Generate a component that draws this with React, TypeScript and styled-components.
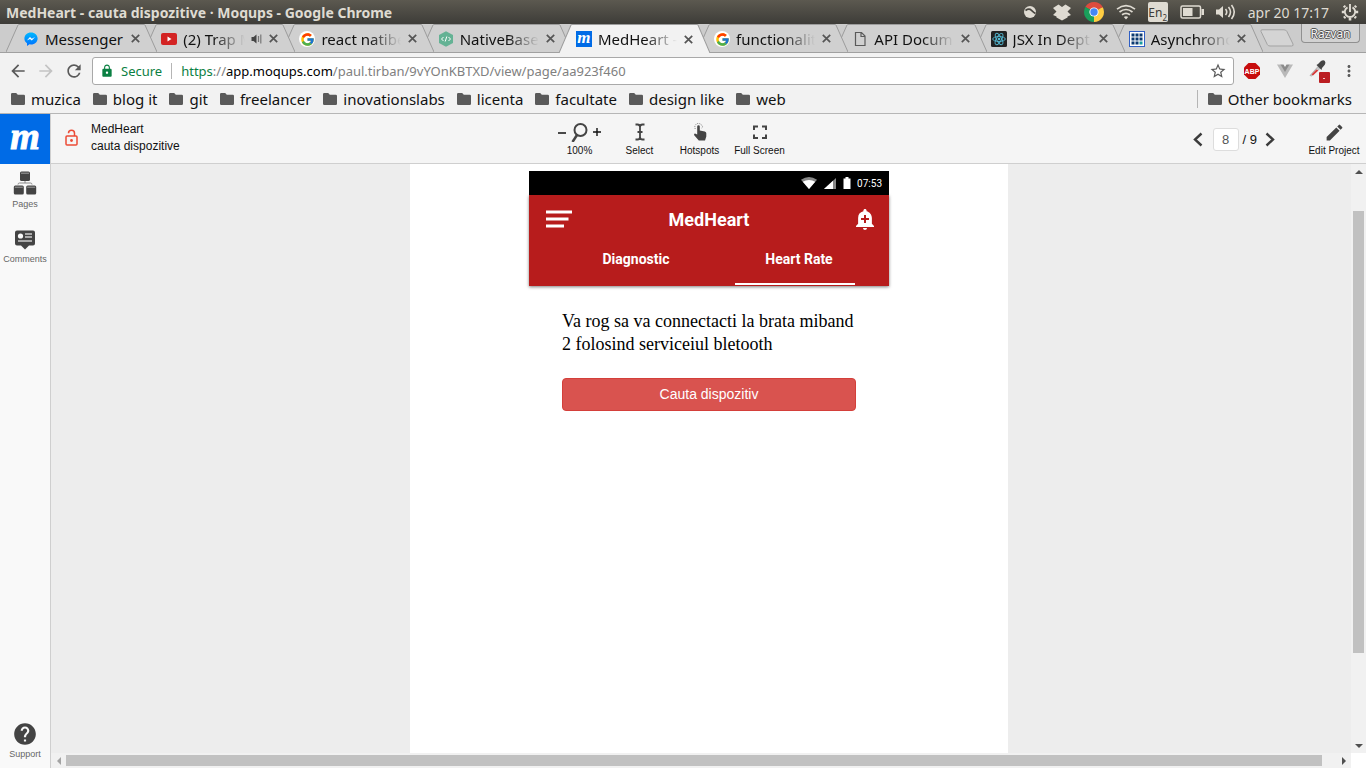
import React from "react";
import styled, { createGlobalStyle } from "styled-components";
import { FcGoogle } from "react-icons/fc";
import {
  MdAddAlert,
  MdArrowBack,
  MdArrowForward,
  MdEdit,
  MdHelp,
  MdLock,
  MdMoreVert,
  MdRefresh,
  MdStarBorder,
} from "react-icons/md";

const uiFont = `"Noto Sans", "Open Sans", sans-serif`;
const appFont = `"Liberation Sans", Arial, sans-serif`;

const GlobalStyle = createGlobalStyle`
  * { box-sizing: border-box; }
  body { margin: 0; font-family: ${appFont}; overflow: hidden; }
  button { border: 0; padding: 0; background: none; font: inherit; color: inherit; cursor: pointer; }
  a { color: inherit; text-decoration: none; }
  svg { display: block; flex: none; }
`;

/* ---------- desktop and browser frame ---------- */

const Screen = styled.div`
  display: flex;
  flex-direction: column;
  height: 100vh;
`;

const DesktopBar = styled.header`
  display: flex;
  align-items: center;
  justify-content: space-between;
  height: 24px;
  padding: 0 7px 0 6px;
  background: linear-gradient(#5c5950, #3d3c38);
  color: #dfdbd2;
  font-family: ${uiFont};
  font-size: 14px;
  white-space: nowrap;
`;

const WindowTitle = styled.h1`
  margin: 0;
  font-size: 14px;
  font-weight: 700;
`;

const Tray = styled.div`
  display: flex;
  align-items: center;
  gap: 12px;
`;

const Language = styled.span`
  display: flex;
  align-items: center;
  justify-content: center;
  width: 20px;
  height: 20px;
  border-radius: 2px;
  background: #dfdbd2;
  color: #3d3c38;
  font-size: 12px;

  sub {
    font-size: 8px;
    line-height: 8px;
    align-self: flex-end;
  }
`;

const TabStrip = styled.div`
  display: flex;
  height: 29px;
  padding: 0 6px;
  background: #cccccc;
  border-bottom: 1px solid #a0a0a0;
  font-family: ${uiFont};
`;

const TabList = styled.nav`
  display: flex;
  flex: 1;
  min-width: 0;
`;

const TabShape = styled.div<{ $active?: boolean; $order: number }>`
  position: relative;
  z-index: ${(p) => (p.$active ? 20 : p.$order)};
  display: flex;
  flex: 1 1 0;
  min-width: 0;
  height: ${(p) => (p.$active ? 29 : 28)}px;
  margin-right: -13px;
  color: ${(p) => (p.$active ? "#f2f2f2" : "#d0d0d0")};

  &:last-child {
    margin-right: 0;
  }
`;

const TabBody = styled.div`
  display: flex;
  align-items: center;
  flex: 1;
  min-width: 0;
  padding: 0 4px;
  border-top: 1px solid #9c9c9c;
  background: currentColor;
`;

const TabLink = styled.a`
  display: flex;
  align-items: center;
  flex: 1;
  gap: 6px;
  min-width: 0;
  color: #111;
  font-size: 15px;
  line-height: 20px;
`;

const TabText = styled.span<{ $fade: boolean }>`
  flex: 1;
  overflow: hidden;
  white-space: nowrap;
  mask-image: ${(p) => (p.$fade ? "linear-gradient(to left, transparent, #000 32px)" : "none")};
`;

const CloseButton = styled.button`
  display: flex;
  margin-left: 7px;
`;

const NewTab = styled.button`
  display: flex;
  align-items: center;
  margin: 0 6px 0 -4px;
`;

const ProfileButton = styled.button`
  align-self: flex-start;
  width: 59px;
  height: 19px;
  border: 1px solid #909090;
  border-top: 0;
  border-radius: 0 0 4px 4px;
  background: #d2d2d2;
  color: #f4f4f4;
  font-size: 12px;
  line-height: 20px;
  text-shadow: 1px 0 #555, -1px 0 #555, 0 1px #555, 0 -1px #555;
`;

const Toolbar = styled.div`
  display: flex;
  align-items: center;
  height: 36px;
  padding: 0 8px;
  background: #f2f2f2;
  color: #5a5a5a;
  font-family: ${uiFont};
`;

const NavButtons = styled.div`
  display: flex;
  gap: 8px;
  width: 84px;
`;

const NavButton = styled.button<{ $faded?: boolean }>`
  opacity: ${(p) => (p.$faded ? 0.3 : 1)};
`;

const AddressBar = styled.div`
  display: flex;
  align-items: center;
  flex: 1;
  height: 28px;
  padding: 0 6px 0 7px;
  border: 1px solid #a9a9a9;
  border-radius: 3px;
  background: #fff;
  font-size: 13px;
`;

const Secure = styled.span`
  display: flex;
  align-items: center;
  gap: 7px;
  margin-right: 9px;
  padding-right: 9px;
  border-right: 1px solid #b5b5b5;
  color: #0b8043;
  line-height: 16px;
`;

const Url = styled.span`
  flex: 1;
  color: #808080;

  em { font-style: normal; color: #0b8043; }
  b { font-weight: 400; color: #000; }
`;

const Extensions = styled.div`
  display: flex;
  align-items: center;
  gap: 15px;
  padding: 0 10px 0 9px;
`;

const BookmarkBar = styled.nav`
  display: flex;
  align-items: center;
  height: 25px;
  padding: 0 14px 5px 11px;
  border-bottom: 1px solid #b6b6b6;
  background: #f2f2f2;
  color: #111;
  font-family: ${uiFont};
  font-size: 15px;
`;

const Bookmark = styled.a`
  display: flex;
  align-items: center;
  gap: 6px;
  margin-right: 12px;
  white-space: nowrap;
  line-height: 18px;
`;

const OtherBookmarks = styled(Bookmark)`
  margin: 0 0 0 auto;
  padding-left: 10px;
  border-left: 1px solid #b5b5b5;
`;

/* ---------- mockup viewer ---------- */

const Viewer = styled.div`
  display: flex;
  flex: 1;
  min-height: 0;
`;

const Sidebar = styled.aside`
  display: flex;
  flex-direction: column;
  align-items: stretch;
  width: 51px;
  border-right: 1px solid #cfcfcf;
  background: #f9f9f9;
`;

const Logo = styled.a`
  display: flex;
  justify-content: center;
  width: 50px;
  height: 50px;
  background: #006be6;
  color: #fff;
  font: italic 700 38px/44px "Liberation Serif", serif;
  -webkit-text-stroke: 1px #fff;
`;

const SideButton = styled.button`
  display: flex;
  flex-direction: column;
  align-items: center;
  justify-content: flex-end;
  gap: 3px;
  height: 55px;
  padding-bottom: 9px;
  color: #444;
  font-size: 9px;
  line-height: 12px;
`;

const SupportButton = styled(SideButton)`
  gap: 1px;
  margin-top: auto;
  padding-bottom: 8px;
`;

const SideLabel = styled.span`
  color: #666;
`;

const Main = styled.main`
  display: flex;
  flex-direction: column;
  flex: 1;
  min-width: 0;
`;

const ViewerBar = styled.div`
  display: grid;
  grid-template-columns: 1fr auto 1fr;
  align-items: center;
  height: 50px;
  padding: 0 5px 0 13px;
  border-bottom: 1px solid #cfcfcf;
  background: #f5f5f5;
  color: #111;
`;

const Project = styled.div`
  display: flex;
  align-items: center;
  gap: 11px;
  padding-bottom: 2px;
  font-size: 12px;
  line-height: 17px;
`;

const Tools = styled.div`
  display: flex;
  margin-right: 86px;
  padding-top: 2px;
`;

const Tool = styled.button<{ $width: number }>`
  display: flex;
  flex-direction: column;
  align-items: center;
  gap: 3px;
  width: ${(p) => p.$width}px;
  font-size: 10px;
  line-height: 12px;
  color: #111;
`;

const ToolGlyph = styled.span`
  display: flex;
  align-items: center;
  justify-content: center;
  height: 20px;
  color: #444;
`;

const Paging = styled.div`
  display: flex;
  align-items: center;
  justify-content: flex-end;
  padding-top: 2px;
  font-size: 13px;
  gap: 4px;
`;

const PageInput = styled.input`
  width: 26px;
  height: 23px;
  margin-left: 2px;
  padding: 0;
  border: 1px solid #ddd;
  border-radius: 3px;
  background: #fff;
  color: #555;
  font: 13px ${appFont};
  text-align: center;
`;

const PageArrow = styled.button`
  display: flex;
  margin: 0 4px;
`;

const EditTool = styled(Tool)`
  margin-left: 24px;
`;

const ScrollGrid = styled.div`
  display: grid;
  grid-template: minmax(0, 1fr) 15px / minmax(0, 1fr) 15px;
  flex: 1;
  min-height: 0;
  background: #fff;
`;

const Canvas = styled.div`
  display: flex;
  justify-content: center;
  padding-left: 16px;
  overflow: hidden;
  background: #ededed;
`;

const Page = styled.section`
  display: flex;
  justify-content: center;
  flex: 0 1 598px;
  padding-top: 7px;
  background: #fff;
`;

const Rail = styled.div<{ $vertical?: boolean }>`
  display: flex;
  flex-direction: ${(p) => (p.$vertical ? "column" : "row")};
  background: #f1f1f1;
`;

const RailArrow = styled.button`
  display: flex;
  align-items: center;
  justify-content: center;
  width: 15px;
  height: 15px;
`;

const RailSpace = styled.div<{ $share: number }>`
  flex: ${(p) => p.$share} 1 0;
`;

const Thumb = styled(RailSpace)<{ $vertical?: boolean }>`
  margin: ${(p) => (p.$vertical ? "0 2px" : "2px 0")};
  background: #c1c1c1;
`;

/* ---------- phone mockup ---------- */

const Phone = styled.article`
  flex: 0 1 360px;
`;

const StatusBar = styled.div`
  display: flex;
  align-items: center;
  justify-content: flex-end;
  height: 24px;
  padding-right: 7px;
  background: #000;
  color: #fff;
  font: 10px Roboto, sans-serif;
`;

const StatusIcons = styled.div`
  display: flex;
  align-items: center;
  gap: 7px;
  margin-right: 6px;
`;

const AppHeader = styled.header`
  height: 91px;
  background: #b71c1c;
  box-shadow: 0 1px 3px rgba(0, 0, 0, 0.5);
  color: #fff;
  font-family: Roboto, sans-serif;
`;

const AppBar = styled.div`
  display: grid;
  grid-template-columns: 1fr auto 1fr;
  align-items: center;
  height: 48px;
  padding: 0 12px;

  button:last-child { justify-self: end; }
`;

const AppTitle = styled.h2`
  margin: 0;
  padding-top: 2px;
  font-size: 18px;
  font-weight: 700;
  line-height: 24px;
`;

const AppTabs = styled.div`
  display: flex;
  justify-content: flex-end;
  gap: 43px;
  padding-right: 34px;
`;

const AppTab = styled.button<{ $current?: boolean }>`
  width: 120px;
  height: 42px;
  padding: 0 0 9px 8px;
  border-bottom: 2px solid ${(p) => (p.$current ? "#fff" : "transparent")};
  font-size: 14px;
  font-weight: 700;
  line-height: 20px;
`;

const AppContent = styled.div`
  padding: 24px 33px;
`;

const Message = styled.p`
  margin: 0 0 22px;
  color: #000;
  font: 18px/23px "Liberation Serif", "Times New Roman", serif;
`;

const SearchButton = styled.button`
  width: 100%;
  height: 33px;
  padding-bottom: 2px;
  border: 1px solid #d43f3a;
  border-radius: 4px;
  background: #d9534f;
  color: #fff;
  font-size: 14px;
`;

/* ---------- drawings ---------- */

const FolderIcon = () => (
  <svg width="14" height="12" viewBox="0 0 14 12">
    <path d="M1.200 0H5.200L6.800 1.700H12.800Q14 1.700 14 2.900V10.800Q14 12 12.800 12H1.200Q0 12 0 10.800V1.200Q0 0 1.200 0z" fill="#5a5a5a" />
  </svg>
);

const MessengerIcon = () => (
  <svg width="16" height="16" viewBox="0 0 16 16">
    <defs>
      <linearGradient id="msg" x1="0" y1="0" x2="0" y2="1">
        <stop offset="0" stopColor="#00b8ff" />
        <stop offset="1" stopColor="#006fff" />
      </linearGradient>
    </defs>
    <path fill="url(#msg)" d="M8 1.500c3.800 0 6.600 2.600 6.600 6s-2.800 6-6.600 6l-1.500-.2L4 15v-2.700C2.300 11.200 1.400 9.500 1.400 7.500c0-3.400 2.800-6 6.600-6z" />
    <path fill="#fff" d="M3.800 9.600 7 6.100l1.800 1.600 3.200-1.600-3.200 3.400L7 7.900z" />
  </svg>
);

const YoutubeIcon = () => (
  <svg width="16" height="16" viewBox="0 0 16 16">
    <rect y="2" width="16" height="12" rx="2" fill="#d32323" />
    <path d="M6.500 5.500v5L10.500 8z" fill="#fff" />
  </svg>
);

const GoogleIcon = () => (
  <svg width="16" height="16" viewBox="0 0 16 16">
    <circle cx="8" cy="8" r="8" fill="#fff" />
    <FcGoogle x="1" y="1" width="14" height="14" />
  </svg>
);

const NativeBaseIcon = () => (
  <svg width="16" height="16" viewBox="0 0 16 16">
    <path d="M8 .3 15 4v8l-7 3.700L1 12V4z" fill="#64b294" />
    <path d="M5.500 6 3.500 8l2 2M10.500 6l2 2-2 2M8.800 5.500l-1.600 5" stroke="#fff" fill="none" />
  </svg>
);

const MFavicon = styled.span`
  width: 16px;
  height: 16px;
  flex: none;
  background: #006be6;
  color: #fff;
  font: italic 700 17px/13px "Liberation Serif", serif;
  text-align: center;
`;

const DocIcon = () => (
  <svg width="16" height="16" viewBox="0 0 16 16" fill="none" stroke="#5a5a5a" strokeWidth="1.200">
    <path d="M3.500 1.500h6l3.500 3.500v9.500h-9.500zM9 1.500V5.500h4" />
  </svg>
);

const ReactIcon = () => (
  <svg width="16" height="16" viewBox="0 0 16 16">
    <rect width="16" height="16" rx="1.500" fill="#222" />
    <g fill="none" stroke="#53b7d1" strokeWidth=".9">
      <ellipse cx="8" cy="8" rx="6.300" ry="2.500" />
      <ellipse cx="8" cy="8" rx="6.300" ry="2.500" transform="rotate(60 8 8)" />
      <ellipse cx="8" cy="8" rx="6.300" ry="2.500" transform="rotate(120 8 8)" />
    </g>
    <circle cx="8" cy="8" r="1.300" fill="#53b7d1" />
  </svg>
);

const GridIcon = () => (
  <svg width="16" height="16" viewBox="0 0 16 16">
    <rect x=".5" y=".5" width="15" height="15" fill="#fff" stroke="#2f5fc4" />
    {[2, 6, 10].map((y) =>
      [2, 6, 10].map((x) => (
        <rect key={`${x}-${y}`} x={x + 0.5} y={y + 0.5} width="3" height="3" fill={x + y === 20 ? "#1a9ba0" : "#0c3a70"} />
      ))
    )}
  </svg>
);

const SlantLeft = ({ active }: { active?: boolean }) => (
  <svg width="13" height={active ? 29 : 28} viewBox="0 0 13 28" preserveAspectRatio="none">
    <path d="M0 28 12 1Q12.300.5 13 .5V28z" fill="currentColor" />
    <path d="M0 28 12 1Q12.300.5 13 .5" fill="none" stroke="#9c9c9c" />
  </svg>
);

const SlantRight = ({ active }: { active?: boolean }) => (
  <svg width="13" height={active ? 29 : 28} viewBox="0 0 13 28" preserveAspectRatio="none">
    <path d="M13 28 1 1Q.7.5 0 .5V28z" fill="currentColor" />
    <path d="M13 28 1 1Q.7.5 0 .5" fill="none" stroke="#9c9c9c" />
  </svg>
);

const CloseIcon = () => (
  <svg width="9" height="9" viewBox="0 0 9 9" stroke="#555" strokeWidth="1.700">
    <path d="M.8.8l7.400 7.400M8.200.8.8 8.200" />
  </svg>
);

const SpeakerIcon = () => (
  <svg width="11" height="12" viewBox="0 0 11 12">
    <path d="M.5 4h2L5.500 1.500v9L2.500 8h-2z" fill="#444" />
    <path d="M7.500 3v6M9.800 1.500v9" stroke="#777" strokeWidth="1.200" />
  </svg>
);

const SphereIcon = () => (
  <svg width="20" height="20" viewBox="0 0 20 20">
    <circle cx="10" cy="10" r="6" fill="#dfdbd2" />
    <path d="M5.500 8.500Q9 6 11.500 8.300T15.500 11.500" fill="none" stroke="#47453f" strokeWidth="1.700" />
  </svg>
);

const DropboxIcon = () => (
  <svg width="20" height="20" viewBox="0 0 20 20" fill="#dfdbd2">
    <path d="M6.500 2.500 10 5l3.500-2.500L19 6l-3.500 3.500L19 13l-3.500 1.500v1L10 18.500l-5.500-3v-1L1 13l3.500-3.500L1 6z" />
  </svg>
);

const ChromeIcon = () => (
  <svg width="20" height="20" viewBox="0 0 20 20">
    <path d="M10 10 1.340 5A10 10 0 0 1 18.660 5z" fill="#dd4b3e" />
    <path d="M10 10 18.660 5A10 10 0 0 1 10 20z" fill="#ffcd42" />
    <path d="M10 10V20A10 10 0 0 1 1.340 5z" fill="#1a9f5b" />
    <path d="M10 5.400h8.900L18.660 5 10 4z" fill="#dd4b3e" />
    <path d="M6 12.300 1.340 5 10 10z" fill="#1a9f5b" />
    <path d="M14 12.300 10 20V13z" fill="#ffcd42" />
    <circle cx="10" cy="10" r="4.600" fill="#fff" />
    <circle cx="10" cy="10" r="3.700" fill="#4687f4" />
  </svg>
);

const WifiIcon = () => (
  <svg width="20" height="16" viewBox="0 0 20 16" fill="none" stroke="#dfdbd2" strokeWidth="1.700">
    <path d="M1 5.200q9-7 18 0M3.500 8q6.500-5 13 0M6 10.800q4-3 8 0" />
    <path d="M7.800 13q2.200-1.500 4.400 0L10 15.400z" fill="#dfdbd2" stroke="none" />
  </svg>
);

const BatteryIcon = () => (
  <svg width="24" height="14" viewBox="0 0 24 14">
    <rect x="1" y="1" width="19.500" height="12" rx="1.500" fill="none" stroke="#dfdbd2" strokeWidth="1.500" />
    <rect x="3" y="3" width="9.500" height="8" fill="#dfdbd2" />
    <path d="M21.500 4H24v6h-2.500z" fill="#dfdbd2" />
  </svg>
);

const VolumeIcon = () => (
  <svg width="20" height="16" viewBox="0 0 20 16">
    <path d="M0 5.500h3L7 2v12L3 10.500H0z" fill="#dfdbd2" />
    <path d="M9.500 5q2.500 3 0 6M12.500 3q4 5 0 10M15.500 1q5.500 7 0 14" fill="none" stroke="#dfdbd2" strokeWidth="1.600" />
  </svg>
);

const PowerIcon = () => (
  <svg width="18" height="18" viewBox="0 0 18 18" fill="none" stroke="#dfdbd2">
    <path d="M6.500 4.300a5.200 5.200 0 1 0 5 0M9 1V9" strokeWidth="1.900" />
    <path d="M4.200 4.200 2.800 2.800M13.800 4.200l1.400-1.400M3 9H.8M15 9h2.200M4.300 13.700 3 15M13.700 13.700l1.300 1.300M9 15v2.400" strokeWidth="2.600" />
  </svg>
);

const AbpIcon = () => (
  <svg width="18" height="18" viewBox="0 0 18 18">
    <path d="M5.500 1h7L17 5.500v7L12.500 17h-7L1 12.500v-7z" fill="#c70d0d" />
    <text x="9" y="11.500" fill="#fff" fontFamily="Liberation Sans" fontWeight="700" fontSize="7" textAnchor="middle">ABP</text>
  </svg>
);

const VueIcon = () => (
  <svg width="18" height="18" viewBox="0 0 18 18">
    <path d="M1 2.500h4L9 9l4-6.500h4L9 16z" fill="#b9b9b9" />
    <path d="M4.500 2.500H7.500L9 5l1.500-2.500h3L9 10z" fill="#8b8b8b" />
  </svg>
);

const PickerIcon = () => (
  <svg width="21" height="24" viewBox="0 0 21 24">
    <path d="M1 16.500 9 7.500l2 2-8.500 7.500z" fill="#c9c9c9" stroke="#999" strokeWidth=".6" />
    <path d="m2.500 15.500 5-5 1.800 1-5.300 5z" fill="#d93a3a" />
    <path d="M7.500 6 9 5 12 2q2.500-1.500 3.800 0t0 3.800L13 9l-.5 2z" fill="#454545" />
    <rect x="10" y="13" width="11" height="11" rx="1" fill="#bb1e22" />
    <rect x="14" y="19" width="2" height="1" fill="#f3c6c6" />
  </svg>
);

const PadlockOpen = () => (
  <svg width="16" height="18" viewBox="0 0 16 18" fill="none" stroke="#ec4b36" strokeWidth="1.500">
    <rect x="2" y="7" width="11" height="9" rx="1" />
    <path d="M4.500 4.200C4.500 2.400 5.800 1.200 7.500 1.200s3 1.200 3 3V7" />
    <circle cx="7.500" cy="11.500" r="1.400" fill="#ec4b36" stroke="none" />
  </svg>
);

const PagesIcon = () => (
  <svg width="24" height="24" viewBox="0 0 24 24">
    <g fill="#444">
      <rect x="7" y=".5" width="10" height="9.500" rx="1.500" />
      <rect x=".8" y="14.500" width="10" height="9" rx="1.500" />
      <rect x="13.200" y="14.500" width="10" height="9" rx="1.500" />
    </g>
    <path d="M8 2.200h8M1.800 16.200h8M14.200 16.200h8" stroke="#aaa" strokeWidth=".9" />
    <path d="M5 13.500Q5 12 6.500 12h11q1.500 0 1.500 1.500M12 10v2" fill="none" stroke="#888" />
  </svg>
);

const CommentsIcon = () => (
  <svg width="22" height="20" viewBox="0 0 22 20">
    <path d="M3 .5h16q2 0 2 2v11q0 2-2 2h-4L11 19.500 7 15.500H3q-2 0-2-2v-11q0-2 2-2z" fill="#444" />
    <circle cx="6.500" cy="6" r="2.600" fill="#f9f9f9" />
    <path d="M11 4h7M11 7h7M4 11h14" stroke="#ccc" strokeWidth="1.300" />
  </svg>
);

const ZoomIcon = () => (
  <svg width="44" height="20" viewBox="0 0 44 20" fill="none" stroke="#444">
    <path d="M0 11h8M35 10h8M39 6v8" stroke="#111" strokeWidth="1.400" />
    <circle cx="22.500" cy="8" r="6" strokeWidth="2" />
    <path d="M19 13 14.500 20" strokeWidth="2.500" />
  </svg>
);

const TextCursorIcon = () => (
  <svg width="10" height="18" viewBox="0 0 10 18" fill="none" stroke="#444" strokeWidth="1.800">
    <path d="M.5 1.500h2Q5 1.500 5 4v10q0 2.500-2.500 2.500h-2M9.500 1.500h-2Q5 1.500 5 4v10q0 2.500 2.500 2.500h2M2.500 9h5" />
  </svg>
);

const HotspotIcon = () => (
  <svg width="14" height="18" viewBox="0 0 14 18" fill="none">
    <path d="M4.200 3.600Q4.200 2.200 5.500 2.200T6.800 3.600V7.500L11.800 8.400Q13.300 8.700 13.300 10.300V13.500L12 17.500H5.800L1.200 12.200Q.6 11 2 10.600L4.200 11.500z" fill="#444" />
    <path d="M2.300 6Q1 3 3.200 1.200T8 1.500 8.800 5" stroke="#777" strokeDasharray="1 1" />
  </svg>
);

const FullScreenIcon = () => (
  <svg width="14" height="14" viewBox="0 0 14 14" fill="none" stroke="#444" strokeWidth="2">
    <path d="M1 5V1.500h4M9 1.500h4V5M13 9.500V13H9M5 13H1V9.500" />
  </svg>
);

const Chevron = ({ flip }: { flip?: boolean }) => (
  <svg width="10" height="15" viewBox="0 0 10 15" fill="none" stroke="#3c3c3c" strokeWidth="2.400">
    <path d={flip ? "M1.500 1.500 8 7.500l-6.500 6" : "M8.500 1.500 2 7.500l6.500 6"} />
  </svg>
);

const arrowPaths = {
  up: "M0 6 4 2l4 4z",
  down: "M0 2h8L4 6z",
  left: "M6 0v8L2 4z",
  right: "M2 0v8l4-4z",
};

const Triangle = ({ dir, color = "#505050" }: { dir: keyof typeof arrowPaths; color?: string }) => (
  <svg width="8" height="8" viewBox="0 0 8 8">
    <path d={arrowPaths[dir]} fill={color} />
  </svg>
);

const PhoneWifi = () => (
  <svg width="16" height="12" viewBox="0 0 16 12">
    <path d="M0 2.800q8-5.600 16 0L8 12z" fill="#888" />
    <path d="M1.800 4.800q6.200-3.600 12.400 0L8 12z" fill="#fff" />
  </svg>
);

const PhoneSignal = () => (
  <svg width="12" height="12" viewBox="0 0 12 12">
    <path d="M0 12 12 1v11z" fill="#888" />
    <path d="M0 12 9 3.700V12z" fill="#fff" />
  </svg>
);

const PhoneBattery = () => (
  <svg width="8" height="12" viewBox="0 0 8 12">
    <path d="M.5 1.500H2.500V0h3v1.500h2V12h-7z" fill="#fff" />
  </svg>
);

const MenuIcon = () => (
  <svg width="31" height="18" viewBox="-5 0 31 18" stroke="#fff" strokeWidth="3">
    <path d="M0 2h26M0 9h22.500M0 16h18" />
  </svg>
);

/* ---------- data ---------- */

type BrowserTab = { title: string; icon: React.ReactNode; active?: boolean; audio?: boolean };

const tabs: BrowserTab[] = [
  { title: "Messenger", icon: <MessengerIcon /> },
  { title: "(2) Trap M", icon: <YoutubeIcon />, audio: true },
  { title: "react natibe", icon: <GoogleIcon /> },
  { title: "NativeBase", icon: <NativeBaseIcon /> },
  { title: "MedHeart -", icon: <MFavicon>m</MFavicon>, active: true },
  { title: "functionalit", icon: <GoogleIcon /> },
  { title: "API Docum", icon: <DocIcon /> },
  { title: "JSX In Dept", icon: <ReactIcon /> },
  { title: "Asynchrono", icon: <GridIcon /> },
];

const bookmarks = ["muzica", "blog it", "git", "freelancer", "inovationslabs", "licenta", "facultate", "design like", "web"];

export default function App() {
  return (
    <Screen>
      <GlobalStyle />
      <DesktopBar>
        <WindowTitle>MedHeart - cauta dispozitive · Moqups - Google Chrome</WindowTitle>
        <Tray>
          <SphereIcon />
          <DropboxIcon />
          <ChromeIcon />
          <WifiIcon />
          <Language>En<sub>2</sub></Language>
          <BatteryIcon />
          <VolumeIcon />
          <time>apr 20 17:17</time>
          <PowerIcon />
        </Tray>
      </DesktopBar>

      <TabStrip>
        <TabList aria-label="Browser tabs">
          {tabs.map((tab, i) => (
            <TabShape key={tab.title} $active={tab.active} $order={tabs.length - i}>
              <SlantLeft active={tab.active} />
              <TabBody>
                <TabLink href="#">
                  {tab.icon}
                  <TabText $fade={i > 0}>{tab.title}</TabText>
                  {tab.audio && <SpeakerIcon />}
                </TabLink>
                <CloseButton aria-label={`Close ${tab.title}`}>
                  <CloseIcon />
                </CloseButton>
              </TabBody>
              <SlantRight active={tab.active} />
            </TabShape>
          ))}
        </TabList>
        <NewTab aria-label="New tab">
          <svg width="36" height="18" viewBox="0 0 36 18" fill="#d4d4d4" stroke="#a3a3a3">
            <path d="M3 .8h22q2 0 2.800 1.500L34 15q.8 2-1.500 2H11Q9 17 8.300 15.500L2 2.500Q1.500.8 3 .8z" />
          </svg>
        </NewTab>
        <ProfileButton>Razvan</ProfileButton>
      </TabStrip>

      <Toolbar>
        <NavButtons>
          <NavButton aria-label="Back"><MdArrowBack size={20} /></NavButton>
          <NavButton aria-label="Forward" $faded><MdArrowForward size={20} /></NavButton>
          <NavButton aria-label="Reload"><MdRefresh size={20} /></NavButton>
        </NavButtons>
        <AddressBar>
          <Secure><MdLock size={14} />Secure</Secure>
          <Url><em>https</em>://<b>app.moqups.com</b>/paul.tirban/9vYOnKBTXD/view/page/aa923f460</Url>
          <MdStarBorder size={18} />
        </AddressBar>
        <Extensions>
          <AbpIcon />
          <VueIcon />
          <PickerIcon />
        </Extensions>
        <MdMoreVert size={18} />
      </Toolbar>

      <BookmarkBar aria-label="Bookmarks">
        {bookmarks.map((name) => (
          <Bookmark key={name} href="#"><FolderIcon />{name}</Bookmark>
        ))}
        <OtherBookmarks href="#"><FolderIcon />Other bookmarks</OtherBookmarks>
      </BookmarkBar>

      <Viewer>
        <Sidebar>
          <Logo href="#">m</Logo>
          <SideButton><PagesIcon /><SideLabel>Pages</SideLabel></SideButton>
          <SideButton><CommentsIcon /><SideLabel>Comments</SideLabel></SideButton>
          <SupportButton><MdHelp size={26} /><SideLabel>Support</SideLabel></SupportButton>
        </Sidebar>

        <Main>
          <ViewerBar>
            <Project>
              <PadlockOpen />
              <div>MedHeart<br />cauta dispozitive</div>
            </Project>
            <Tools>
              <Tool $width={60}><ToolGlyph><ZoomIcon /></ToolGlyph>100%</Tool>
              <Tool $width={60}><ToolGlyph><TextCursorIcon /></ToolGlyph>Select</Tool>
              <Tool $width={60}><ToolGlyph><HotspotIcon /></ToolGlyph>Hotspots</Tool>
              <Tool $width={60}><ToolGlyph><FullScreenIcon /></ToolGlyph>Full Screen</Tool>
            </Tools>
            <Paging>
              <PageArrow aria-label="Previous page"><Chevron /></PageArrow>
              <PageInput aria-label="Page" defaultValue="8" />
              <span>/ 9</span>
              <PageArrow aria-label="Next page"><Chevron flip /></PageArrow>
              <EditTool $width={54}><ToolGlyph><MdEdit size={21} /></ToolGlyph>Edit Project</EditTool>
            </Paging>
          </ViewerBar>

          <ScrollGrid>
            <Canvas>
              <Page>
                <Phone>
                  <StatusBar>
                    <StatusIcons>
                      <PhoneWifi />
                      <PhoneSignal />
                      <PhoneBattery />
                    </StatusIcons>
                    07:53
                  </StatusBar>
                  <AppHeader>
                    <AppBar>
                      <button aria-label="Menu"><MenuIcon /></button>
                      <AppTitle>MedHeart</AppTitle>
                      <button aria-label="Add alert"><MdAddAlert size={24} /></button>
                    </AppBar>
                    <AppTabs>
                      <AppTab>Diagnostic</AppTab>
                      <AppTab $current>Heart Rate</AppTab>
                    </AppTabs>
                  </AppHeader>
                  <AppContent>
                    <Message>Va rog sa va connectacti la brata miband 2 folosind serviceiul bletooth</Message>
                    <SearchButton>Cauta dispozitiv</SearchButton>
                  </AppContent>
                </Phone>
              </Page>
            </Canvas>
            <Rail $vertical>
              <RailArrow aria-label="Scroll up"><Triangle dir="up" /></RailArrow>
              <RailSpace $share={32} />
              <Thumb $vertical $share={442} />
              <RailSpace $share={85} />
              <RailArrow aria-label="Scroll down"><Triangle dir="down" /></RailArrow>
            </Rail>
            <Rail>
              <RailArrow aria-label="Scroll left"><Triangle dir="left" color="#a3a3a3" /></RailArrow>
              <Thumb $share={1256} />
              <RailSpace $share={14} />
              <RailArrow aria-label="Scroll right"><Triangle dir="right" /></RailArrow>
            </Rail>
          </ScrollGrid>
        </Main>
      </Viewer>
    </Screen>
  );
}
